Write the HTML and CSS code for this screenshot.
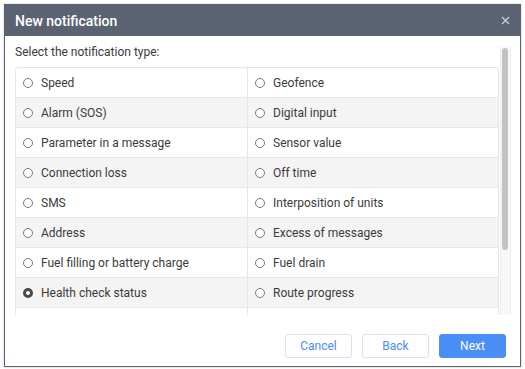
FILE: index.html
```html
<!DOCTYPE html>
<html lang="en">
<head>
    <meta charset="UTF-8">
    <meta name="viewport" content="width=device-width, initial-scale=1.0">
    <title>New notification</title>
    <link rel="stylesheet" href="styles.css">
</head>
<body>
    <div class="dialog">
        <div class="dialog-header">
            <span class="dialog-title">New notification</span>
            <button class="close-btn" aria-label="Close">
                <svg width="9" height="9" viewBox="0 0 9 9">
                    <path d="M1 1L8 8M8 1L1 8" stroke="#c9cdd4" stroke-width="1.3" fill="none"/>
                </svg>
            </button>
        </div>

        <div class="dialog-body">
            <div class="type-list">
                <div class="type-caption">Select the notification type:</div>

                <!-- two columns of types, rows alternate white / grey -->
                <div class="type-table">
                    <label class="type-cell"><input type="radio" name="type"><span>Speed</span></label>
                    <label class="type-cell"><input type="radio" name="type"><span>Geofence</span></label>
                    <label class="type-cell"><input type="radio" name="type"><span>Alarm (SOS)</span></label>
                    <label class="type-cell"><input type="radio" name="type"><span>Digital input</span></label>
                    <label class="type-cell"><input type="radio" name="type"><span>Parameter in a message</span></label>
                    <label class="type-cell"><input type="radio" name="type"><span>Sensor value</span></label>
                    <label class="type-cell"><input type="radio" name="type"><span>Connection loss</span></label>
                    <label class="type-cell"><input type="radio" name="type"><span>Off time</span></label>
                    <label class="type-cell"><input type="radio" name="type"><span>SMS</span></label>
                    <label class="type-cell"><input type="radio" name="type"><span>Interposition of units</span></label>
                    <label class="type-cell"><input type="radio" name="type"><span>Address</span></label>
                    <label class="type-cell"><input type="radio" name="type"><span>Excess of messages</span></label>
                    <label class="type-cell"><input type="radio" name="type"><span>Fuel filling or battery charge</span></label>
                    <label class="type-cell"><input type="radio" name="type"><span>Fuel drain</span></label>
                    <label class="type-cell"><input type="radio" name="type" checked><span>Health check status</span></label>
                    <label class="type-cell"><input type="radio" name="type"><span>Route progress</span></label>
                    <label class="type-cell"><input type="radio" name="type"><span>Maintenance</span></label>
                    <label class="type-cell"><input type="radio" name="type"><span>Driver</span></label>
                </div>
            </div>

            <div class="scroll-track">
                <div class="scroll-thumb"></div>
            </div>
        </div>

        <div class="dialog-footer">
            <button class="btn">Cancel</button>
            <button class="btn">Back</button>
            <button class="btn btn-primary">Next</button>
        </div>
    </div>
</body>
</html>
```

FILE: styles.css
```css
body {
    margin: 0;
    background: #fff;
    font-family: Roboto, 'Liberation Sans', Arial, sans-serif;
    color: #3b3b3b;
}

.dialog {
    margin: 4px;
    width: 515px;
    border: 1px solid #5b6372;
    border-top: none;
    background: #fff;
    box-shadow: 0 0 2px rgba(60, 70, 90, 0.35);
}

.dialog-header {
    height: 32px;
    background: #5b6372;
    display: flex;
    align-items: center;
    justify-content: space-between;
    padding: 0 10px 0 10px;
}

.dialog-title {
    color: #fff;
    font-size: 14px;
    font-weight: 500;
    line-height: 16px;
    margin-top: 1px;
}

.close-btn {
    border: none;
    background: none;
    padding: 0;
    width: 9px;
    height: 9px;
    display: flex;
    margin-top: 1px;
}

.dialog-body {
    display: flex;
    height: 269px;
    padding: 10px 8px 0 10px;
}

.type-list {
    width: 485px;
    overflow: hidden;
}

.scroll-track {
    width: 11px;
    margin-top: 1px;
    border-left: 1px solid #ececec;
    border-right: 1px solid #ececec;
    background: #f8f8f8;
    padding: 1px 2px 0 1px;
    box-sizing: border-box;
}

.scroll-thumb {
    height: 202px;
    background: #c2c2c2;
    border-radius: 4px;
}

.type-caption {
    font-size: 12px;
    line-height: 12px;
    margin-bottom: 9px;
}

.type-table {
    display: grid;
    grid-template-columns: 232px 1fr;
    width: 484px;
    border: 1px solid #e6e6e6;
    border-radius: 3px;
    box-sizing: border-box;
}

.type-cell {
    display: flex;
    align-items: center;
    gap: 8px;
    height: 30px;
    padding-left: 7px;
    border-bottom: 1px solid #e6e6e6;
    box-sizing: border-box;
    font-size: 12px;
    cursor: pointer;
}

.type-cell:nth-child(odd) {
    border-right: 1px solid #e6e6e6;
}

.type-cell:nth-child(4n+3),
.type-cell:nth-child(4n+4) {
    background: #f4f4f4;
}

.type-cell input {
    appearance: none;
    margin: 0;
    width: 10px;
    height: 10px;
    border: 1px solid #7a7a7a;
    border-radius: 50%;
    background: #fff;
    box-sizing: border-box;
}

.type-cell input:checked {
    border: 3.5px solid #4a4a4a;
}

.dialog-footer {
    display: flex;
    justify-content: flex-end;
    gap: 10px;
    padding: 19px 14px 8px 0;
}

.btn {
    width: 67px;
    height: 24px;
    border: 1px solid #dde1e6;
    border-radius: 3px;
    background: #fff;
    color: #4a8cf6;
    font-family: Roboto, 'Liberation Sans', Arial, sans-serif;
    font-size: 12px;
    cursor: pointer;
}

.btn-primary {
    background: #4a8ef8;
    border-color: #4a8ef8;
    color: #fff;
}
```
